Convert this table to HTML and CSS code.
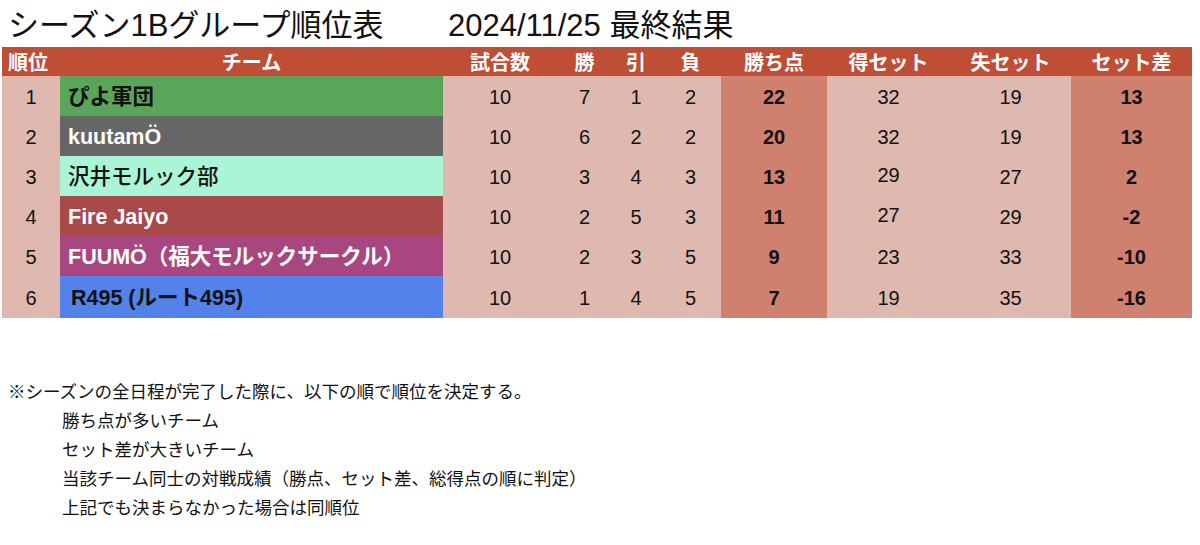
FILE: index.html
```html
<!DOCTYPE html>
<html lang="ja">
<head>
<meta charset="utf-8">
<title>シーズン1Bグループ順位表</title>
<link rel="stylesheet" href="styles.css">
</head>
<body>
<h1 class="title"><span class="title-main">シーズン1Bグループ順位表</span><span class="title-date">2024/11/25 最終結果</span></h1>
<div class="standings">
  <div class="hd hd-rank">順位</div>
  <div class="hd">チーム</div>
  <div class="hd">試合数</div>
  <div class="hd">勝</div>
  <div class="hd">引</div>
  <div class="hd">負</div>
  <div class="hd">勝ち点</div>
  <div class="hd">得セット</div>
  <div class="hd">失セット</div>
  <div class="hd">セット差</div>

  <div class="rank">1</div><div class="team team-green">ぴよ軍団</div>
  <div class="num">10</div><div class="num">7</div><div class="num">1</div><div class="num">2</div>
  <div class="num key">22</div><div class="num">32</div><div class="num">19</div><div class="num key">13</div>

  <div class="rank">2</div><div class="team team-gray">kuutamÖ</div>
  <div class="num">10</div><div class="num">6</div><div class="num">2</div><div class="num">2</div>
  <div class="num key">20</div><div class="num">32</div><div class="num">19</div><div class="num key">13</div>

  <div class="rank">3</div><div class="team team-mint">沢井モルック部</div>
  <div class="num">10</div><div class="num">3</div><div class="num">4</div><div class="num">3</div>
  <div class="num key">13</div><div class="num raised">29</div><div class="num">27</div><div class="num key">2</div>

  <div class="rank">4</div><div class="team team-red">Fire Jaiyo</div>
  <div class="num">10</div><div class="num">2</div><div class="num">5</div><div class="num">3</div>
  <div class="num key">11</div><div class="num raised">27</div><div class="num">29</div><div class="num key">-2</div>

  <div class="rank">5</div><div class="team team-magenta">FUUMÖ（福大モルックサークル）</div>
  <div class="num">10</div><div class="num">2</div><div class="num">3</div><div class="num">5</div>
  <div class="num key">9</div><div class="num">23</div><div class="num">33</div><div class="num key">-10</div>

  <div class="rank">6</div><div class="team team-blue team-r">R495 (ルート495)</div>
  <div class="num">10</div><div class="num">1</div><div class="num">4</div><div class="num">5</div>
  <div class="num key">7</div><div class="num">19</div><div class="num">35</div><div class="num key">-16</div>
</div>
<div class="notes">
  <p class="note-lead">※シーズンの全日程が完了した際に、以下の順で順位を決定する。</p>
  <p class="note-item">勝ち点が多いチーム</p>
  <p class="note-item">セット差が大きいチーム</p>
  <p class="note-item">当該チーム同士の対戦成績（勝点、セット差、総得点の順に判定）</p>
  <p class="note-item">上記でも決まらなかった場合は同順位</p>
</div>
</body>
</html>
```

FILE: styles.css
```css
html, body {
  margin: 0;
  padding: 0;
  background: #ffffff;
}

body {
  width: 1200px;
  height: 545px;
  overflow: hidden;
  font-family: "Liberation Sans", "Noto Sans CJK JP", sans-serif;
  color: #111111;
}

.title {
  display: flex;
  align-items: center;
  height: 47px;
  margin: 0;
  padding: 3px 0 0 8px;
  box-sizing: border-box;
  font-size: 31px;
  font-weight: normal;
  line-height: 1;
  color: #111111;
}

.title-main {
  width: 440px;
  flex-shrink: 0;
}

.standings {
  display: grid;
  grid-template-columns: 58px 383px 114px 55px 48px 61px 106px 123px 121px 121px;
  grid-template-rows: 29px 40px 40px 40px 40px 40px 42px;
  width: 1190px;
  margin-left: 2px;
}

.hd {
  display: flex;
  align-items: center;
  justify-content: center;
  background: #bf4e37;
  color: #ffffff;
  font-family: "Noto Sans CJK JP", sans-serif;
  font-weight: bold;
  font-size: 20px;
  line-height: 1;
}

.hd-rank {
  justify-content: flex-start;
  padding-left: 6px;
}

.rank,
.num {
  display: flex;
  align-items: center;
  justify-content: center;
  background: #dfb9b0;
  font-size: 20px;
  line-height: 1;
  color: #111111;
  padding-top: 2px;
  box-sizing: border-box;
}

.num.key {
  background: #d0806f;
  font-weight: bold;
}

.num.raised {
  padding-top: 0;
  padding-bottom: 3px;
}

.team {
  display: flex;
  align-items: center;
  padding: 3px 0 0 8px;
  box-sizing: border-box;
  font-family: "Liberation Sans", "Noto Sans CJK JP", sans-serif;
  font-weight: bold;
  font-size: 21.5px;
  line-height: 1;
}

.team-r {
  padding-left: 11px;
}

.team-green { background: #59a65a; color: #111111; }
.team-gray { background: #666666; color: #ffffff; }
.team-mint { background: #aaf5d6; color: #111111; font-weight: 500; }
.team-red { background: #a8494a; color: #ffffff; }
.team-magenta { background: #a8477f; color: #ffffff; }
.team-blue { background: #5282ea; color: #111111; }

.notes {
  margin-top: 58px;
  font-family: "Noto Sans CJK JP", sans-serif;
  font-size: 17.5px;
  color: #111111;
}

.notes p {
  margin: 0;
  height: 29px;
  line-height: 29px;
}

.note-lead {
  padding-left: 8px;
}

.note-item {
  padding-left: 62px;
}
```
